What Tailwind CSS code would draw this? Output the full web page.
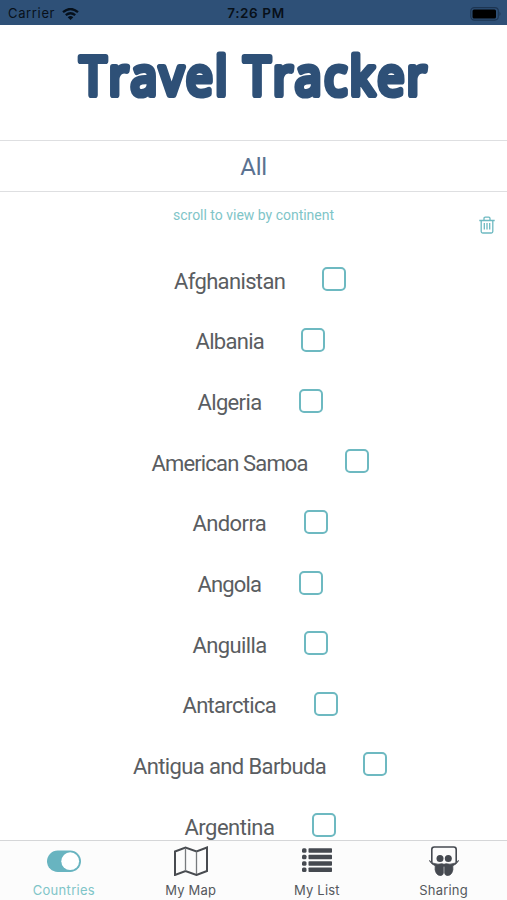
<!DOCTYPE html>
<html lang="en">
<head>
<meta charset="utf-8">
<title>Travel Tracker</title>
<script src="https://cdn.jsdelivr.net/npm/@tailwindcss/browser@4"></script>
</head>
<body class="bg-white">
<div class="flex h-[900px] w-[507px] flex-col overflow-hidden bg-white font-['Roboto',sans-serif]">
  <header class="grid h-[25px] shrink-0 grid-cols-3 items-center bg-[#2e5077] px-2 pt-[2px] font-['Inter',sans-serif] text-[13px] text-[#08101a]">
    <div class="flex items-center gap-[7px]"><span class="tracking-[0.650px]">Carrier</span>
      <svg class="h-[12px] w-[17px]" viewBox="0 0 17 12" fill="none" stroke="#06101b" stroke-width="2.3"><path d="M1 4.2Q8.500-2.200 16 4.200M3.800 7.200Q8.500 3.200 13.200 7.200"/><path d="M8.500 12L5.700 9.200Q8.500 6.900 11.300 9.200Z" fill="#06101b" stroke="none"/></svg>
    </div>
    <div class="pl-[7px] text-center text-[13.500px] font-semibold"><span class="relative -left-[1px] tracking-[0.600px]">7:26 PM</span></div>
    <svg class="mr-[-3px] h-[14px] w-[32px] justify-self-end" viewBox="0 0 32 14"><rect x=".8" y=".6" width="27.500" height="12.500" rx="3.500" fill="none" stroke="#1d3552" stroke-width="1.100"/><rect x="2.500" y="2.400" width="23.500" height="9" rx="1.500" fill="#000"/><path d="M29.500 4.500q2 2.300 0 4.600z" fill="#1d3552"/></svg>
  </header>

  <div class="h-[115px] shrink-0">
    <svg class="h-[115px] w-[507px]" viewBox="0 25 507 115" fill="#2e5077" stroke="#2e5077" stroke-width="6.200" stroke-linejoin="round" stroke-linecap="round" font-family="Open Sans, sans-serif" font-weight="500" font-size="53" letter-spacing="3">
      <text x="80" y="95" textLength="150" lengthAdjust="spacingAndGlyphs">Travel</text>
      <text x="244" y="95" textLength="185" lengthAdjust="spacingAndGlyphs">Tracker</text>
    </svg>
  </div>

  <div class="flex h-[52px] shrink-0 items-center justify-center border-y border-[#dedfe1] pt-[2px] text-[24px] tracking-[-0.300px] text-[#5b7291]">All</div>
  <div class="flex h-[57px] shrink-0 justify-between pr-[12px] pl-[173px]">
    <p class="pt-[13px] text-[14px] leading-5 tracking-[-0.010px] whitespace-nowrap text-[#7fc5c8]">scroll to view by continent</p>
    <svg class="mt-[24px] h-[18px] w-[16px]" viewBox="0 0 16 18" fill="none" stroke="#6db9c1" stroke-width="1.300"><path d="M.3 4.500H15.700M2.200 4.500V15.500Q2.200 17 3.700 17H12.300Q13.800 17 13.800 15.500V4.500M5 4.300V2.500Q5 1.200 6.300 1.200H9.700Q11 1.200 11 2.500V4.300M5.300 7V13.500M8 7V13.500M10.700 7V13.500"/></svg>
  </div>

  <main class="flex min-h-0 flex-1 flex-col overflow-hidden pl-[13px] text-[22px] text-[#5a5d61]">
    <div class="flex h-[60.650px] shrink-0 items-center justify-center gap-[37px]"><span class="w-[111px] whitespace-nowrap pt-[4px] tracking-[-0.650px]">Afghanistan</span><i class="size-[24px] rounded-[5px] border-2 border-[#6db9c1]"></i></div>
    <div class="flex h-[60.650px] shrink-0 items-center justify-center gap-[37px]"><span class="w-[68px] whitespace-nowrap pt-[4px] tracking-[-0.700px]">Albania</span><i class="size-[24px] rounded-[5px] border-2 border-[#6db9c1]"></i></div>
    <div class="flex h-[60.650px] shrink-0 items-center justify-center gap-[37px]"><span class="w-[64px] whitespace-nowrap pt-[4px] tracking-[-0.650px]">Algeria</span><i class="size-[24px] rounded-[5px] border-2 border-[#6db9c1]"></i></div>
    <div class="flex h-[60.650px] shrink-0 items-center justify-center gap-[37px]"><span class="w-[156px] whitespace-nowrap pt-[4px] tracking-[-0.850px]">American Samoa</span><i class="size-[24px] rounded-[5px] border-2 border-[#6db9c1]"></i></div>
    <div class="flex h-[60.650px] shrink-0 items-center justify-center gap-[37px]"><span class="w-[74px] whitespace-nowrap pt-[4px] tracking-[-0.600px]">Andorra</span><i class="size-[24px] rounded-[5px] border-2 border-[#6db9c1]"></i></div>
    <div class="flex h-[60.650px] shrink-0 items-center justify-center gap-[37px]"><span class="w-[64px] whitespace-nowrap pt-[4px] tracking-[-0.850px]">Angola</span><i class="size-[24px] rounded-[5px] border-2 border-[#6db9c1]"></i></div>
    <div class="flex h-[60.650px] shrink-0 items-center justify-center gap-[37px]"><span class="w-[74px] whitespace-nowrap pt-[4px] tracking-[-0.600px]">Anguilla</span><i class="size-[24px] rounded-[5px] border-2 border-[#6db9c1]"></i></div>
    <div class="flex h-[60.650px] shrink-0 items-center justify-center gap-[37px]"><span class="w-[94px] whitespace-nowrap pt-[4px] tracking-[-0.700px]">Antarctica</span><i class="size-[24px] rounded-[5px] border-2 border-[#6db9c1]"></i></div>
    <div class="flex h-[60.650px] shrink-0 items-center justify-center gap-[37px]"><span class="w-[193px] whitespace-nowrap pt-[4px] tracking-[-0.620px]">Antigua and Barbuda</span><i class="size-[24px] rounded-[5px] border-2 border-[#6db9c1]"></i></div>
    <div class="flex h-[60.650px] shrink-0 items-center justify-center gap-[37px]"><span class="w-[90px] whitespace-nowrap pt-[4px] tracking-[-0.500px]">Argentina</span><i class="size-[24px] rounded-[5px] border-2 border-[#6db9c1]"></i></div>
  </main>

  <nav class="grid h-[60px] shrink-0 grid-cols-4 border-t border-[#d5d6d8] bg-[#fcfcfc] font-['Inter',sans-serif] text-[13px] leading-4 text-[#55585c]">
    <div class="flex flex-col items-center gap-[6px] pt-[5px] pl-px text-[#7fc5c8]">
      <svg class="h-[30px] w-[34px]" viewBox="0 0 34 30"><rect y="4.500" width="34" height="21.500" rx="10.750" fill="#68b4c0"/><circle cx="23.200" cy="15.200" r="8.900" fill="#fff"/></svg>
      <span class="tracking-[0.300px]">Countries</span>
    </div>
    <div class="flex flex-col items-center gap-[6px] pt-[5px] pl-px">
      <svg class="h-[30px] w-[36px]" viewBox="0 0 36 30" fill="none" stroke="#484b50"><path d="M2 5.500L12.500 1.500L23.500 5.500L34 1.500V25L23.500 29L12.500 25L2 29Z" stroke-width="2"/><path d="M12.500 2V25M23.500 5.500V28" stroke-width="1.300" stroke="#777a7d"/></svg>
      <span class="tracking-[0.200px]">My Map</span>
    </div>
    <div class="flex flex-col items-center gap-[6px] pt-[5px]">
      <svg class="h-[30px] w-[30px]" viewBox="0 0 30 30" fill="#454950"><rect y="2.300" width="4.500" height="4.500" rx="1.500"/><rect x="6.500" y="2.300" width="23.500" height="4.500" rx=".8"/><rect y="8.800" width="4.500" height="4.500" rx="1.500"/><rect x="6.500" y="8.800" width="23.500" height="4.500" rx=".8"/><rect y="15.200" width="4.500" height="4.500" rx="1.500"/><rect x="6.500" y="15.200" width="23.500" height="4.500" rx=".8"/><rect y="21.500" width="4.500" height="4.500" rx="1.500"/><rect x="6.500" y="21.500" width="23.500" height="4.500" rx=".8"/></svg>
      <span class="tracking-[0.200px]">My List</span>
    </div>
    <div class="flex flex-col items-center gap-[6px] pt-[5px]">
      <svg class="h-[30px] w-[30px]" viewBox="0 0 30 30" fill="#454950"><path d="M2.800 16V3.500Q2.800 1 5.300 1H24.700Q27.200 1 27.200 3.500V16" fill="none" stroke="#454950" stroke-width="1.600"/><circle cx="11" cy="12.500" r="3.500"/><circle cx="19.300" cy="12.500" r="3.500"/><path d="M.3 14.500Q4 18 9 18.200Q14 17.200 15 18.300Q16 17.200 21 18.200Q26 18 29.700 14.500Q28 18 23.800 19.800Q24.500 24 22.800 27Q21 30 18 29.500Q15.700 29 15.700 27V20.500H14.300V27Q14.300 29 12 29.500Q9 30 7.200 27Q5.500 24 6.200 19.800Q2 18 .3 14.500Z" stroke="#454950" stroke-width=".8"/></svg>
      <span class="tracking-[0.200px]">Sharing</span>
    </div>
  </nav>
</div>
</body>
</html>
